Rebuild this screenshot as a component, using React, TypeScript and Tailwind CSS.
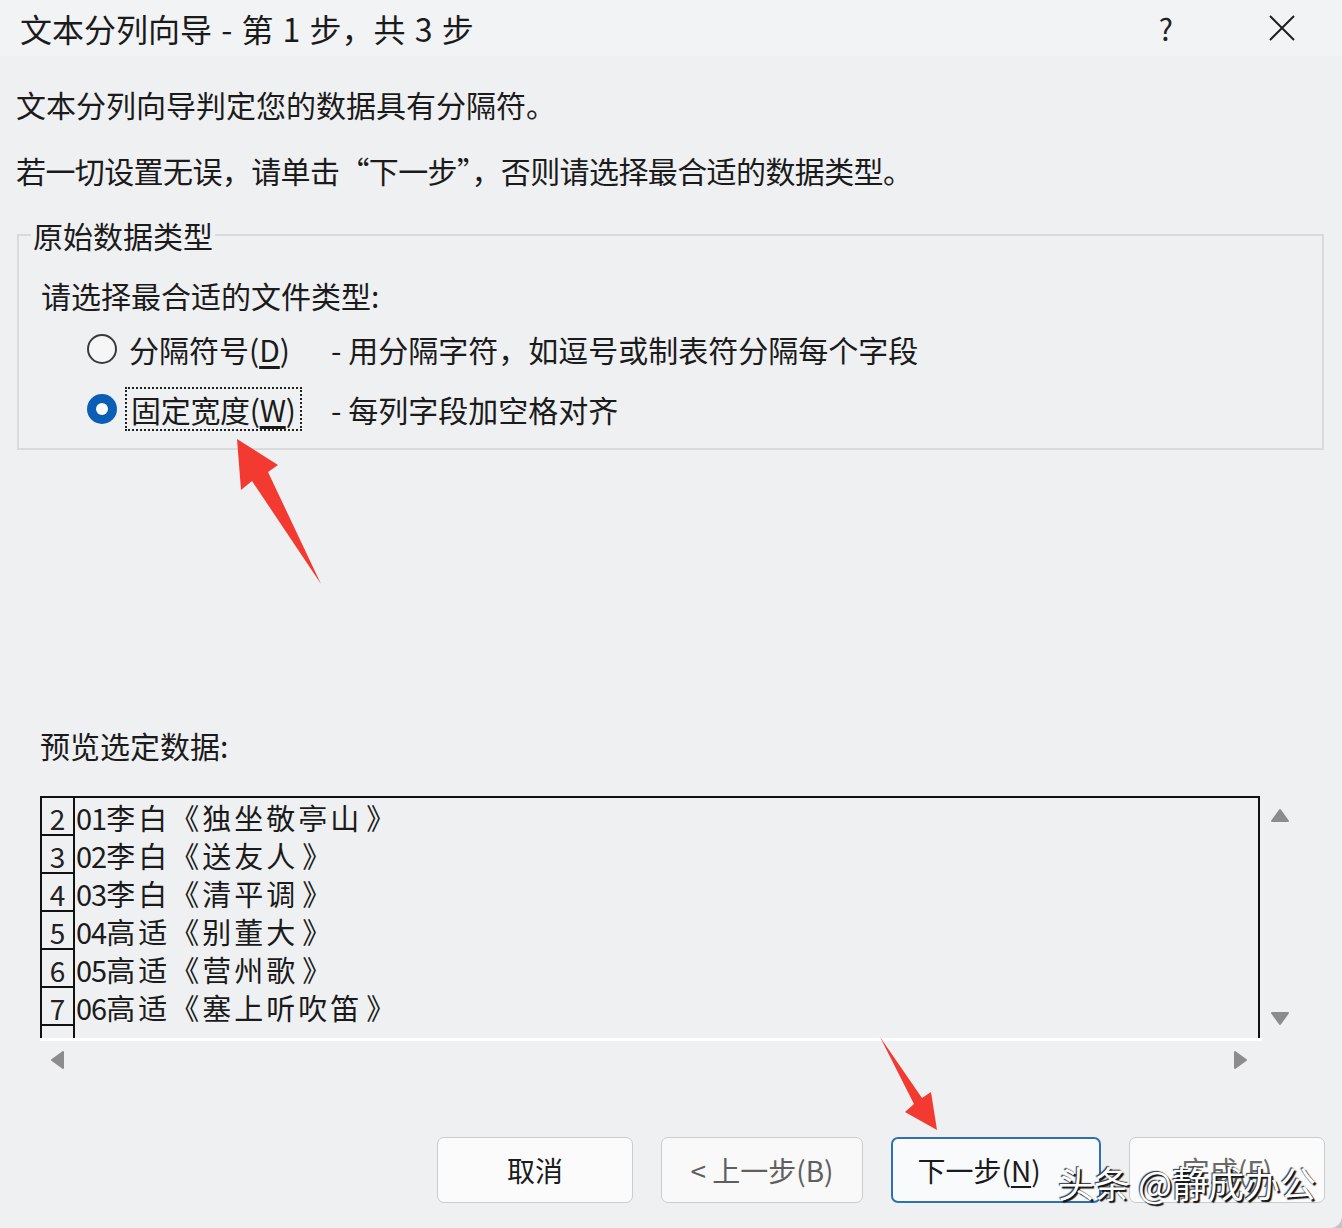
import React from "react";

const rows = [
  { n: "2", id: "01", a: "李白", t: "独坐敬亭山" },
  { n: "3", id: "02", a: "李白", t: "送友人" },
  { n: "4", id: "03", a: "李白", t: "清平调" },
  { n: "5", id: "04", a: "高适", t: "别董大" },
  { n: "6", id: "05", a: "高适", t: "营州歌" },
  { n: "7", id: "06", a: "高适", t: "塞上听吹笛" },
];

function Tri({ dir }: { dir: "up" | "down" | "left" | "right" }) {
  const d = {
    up: "M9 1 L17 12 L1 12 Z",
    down: "M1 2 L17 2 L9 13 Z",
    left: "M13 1 L13 17 L2 9 Z",
    right: "M3 1 L3 17 L14 9 Z",
  }[dir];
  return (
    <svg width="18" height="18" viewBox="0 0 18 18">
      <path d={d} fill="#8c8c8c" stroke="#8c8c8c" strokeWidth="2" strokeLinejoin="round" />
    </svg>
  );
}

export default function App() {
  return (
    <div className="w-[1342px] h-[1228px] bg-[#c4c4c4] font-['Noto_Sans_CJK_SC','Noto_Sans',sans-serif] text-[#1b1b1b]">
      <div className="relative w-full h-full bg-[#eff0f2] rounded-br-[12px] overflow-hidden flex flex-col">
        {/* title bar */}
        <div className="h-[56px] shrink-0 flex items-center bg-[#f2f3f5] pl-[20px]">
          <span className="text-[32px] leading-[40px] [word-spacing:2px]">文本分列向导 - 第 1 步，共 3 步</span>
          <span className="ml-auto text-[30px] leading-[40px] text-[#222] mr-[96px]">?</span>
          <svg width="26" height="26" viewBox="0 0 26 26" className="mr-[47px]">
            <path d="M1 1 L25 25 M25 1 L1 25" stroke="#1f1f1f" strokeWidth="2" />
          </svg>
        </div>

        <div className="px-[16px] flex flex-col text-[30px]">
          <p className="mt-[28px] leading-[40px]">文本分列向导判定您的数据具有分隔符。</p>
          <p className="mt-[26px] leading-[40px] tracking-[-0.6px]">
            若一切设置无误，请单击“下一步”，否则请选择最合适的数据类型。
          </p>

          <fieldset className="mt-[25px] ml-[1px] w-[1307px] border-2 border-[#d9dadc] pl-[12px] pb-[9px]">
            <legend className="px-[2px] leading-[40px]">原始数据类型</legend>
            <div className="pl-[10px]">
              <p className="mt-[20px] leading-[40px]">请选择最合适的文件类型:</p>
              <div className="mt-[4px] ml-[46px] h-[60px] flex items-center">
                <span className="w-[30px] h-[30px] rounded-full border-2 border-[#3a3a3a] bg-[#f6f6f6]" />
                <span className="ml-[12px] w-[202px] leading-[40px]">
                  分隔符号(<span className="underline underline-offset-4">D</span>)
                </span>
                <span className="leading-[40px]">- 用分隔字符，如逗号或制表符分隔每个字段</span>
              </div>
              <div className="ml-[46px] h-[60px] flex items-center">
                <span className="w-[30px] h-[30px] rounded-full bg-[#0a5eb6] flex items-center justify-center">
                  <span className="w-[12px] h-[12px] rounded-full bg-white" />
                </span>
                <span className="ml-[8px] w-[206px]">
                  <span className="inline-block border-2 border-dotted border-[#222] px-[4px] leading-[40px] tracking-[-0.3px]">
                    固定宽度(<span className="underline underline-offset-4">W</span>)
                  </span>
                </span>
                <span className="leading-[40px]">- 每列字段加空格对齐</span>
              </div>
            </div>
          </fieldset>

          <p className="mt-[275px] ml-[24px] leading-[40px]">预览选定数据:</p>

          <div className="mt-[31px] ml-[24px] flex">
            <div className="flex flex-col">
              <div className="w-[1220px] h-[242px] border-2 border-b-0 border-[#111] overflow-hidden flex flex-col">
                {rows.concat([{ n: "", id: "", a: "", t: "" }]).map((r, i) => (
                  <div key={i} className="flex h-[38px] shrink-0">
                    <div className="w-[33px] border-r-2 border-b-2 border-[#111] flex items-end justify-center text-[28px] leading-[31px] text-[#222]">
                      {r.n}
                    </div>
                    {r.id && (
                      <div className="flex items-center text-[29px] leading-[38px] pl-[1px]">
                        <span className="tracking-[-1px]">{r.id}</span>
                        <span className="tracking-[3px]">
                          {r.a}《{r.t}
                          <span className="ml-[4px]">》</span>
                        </span>
                      </div>
                    )}
                  </div>
                ))}
              </div>
              <div className="w-[1222px] h-[3px] bg-white" />
              <div className="h-[38px] flex items-center justify-between pl-[10px] pr-[12px]">
                <Tri dir="left" />
                <Tri dir="right" />
              </div>
            </div>
            <div className="ml-[8px] w-[20px] h-[245px] flex flex-col justify-between items-center pt-[13px] pb-[12px]">
              <Tri dir="up" />
              <Tri dir="down" />
            </div>
          </div>

          <div className="mt-[58px] ml-[421px] flex gap-[28px] text-[28px]">
            <button className="w-[196px] h-[66px] rounded-[7px] border border-[#cbcbcb] bg-[#fbfbfc]">取消</button>
            <button className="w-[202px] h-[66px] rounded-[7px] border border-[#cbcbcb] bg-[#f9f9fa] text-[#5f5f5f]">
              &lt; 上一步(B)
            </button>
            <button className="w-[210px] h-[66px] rounded-[7px] border-2 border-[#2f6fb4] bg-[#f9fafc] pr-[34px]">
              下一步(<span className="underline underline-offset-4">N</span>)
            </button>
            <button className="w-[196px] h-[66px] rounded-[7px] border border-[#cbcbcb] bg-[#fbfbfc] text-[#6a6a6a]">
              完成(F)
            </button>
          </div>
        </div>

        {/* annotation arrows */}
        <svg className="absolute inset-0 pointer-events-none" width="1342" height="1228">
          <path d="M237 439 L278 465 L268 472 L321 584 L252 481 L241 490 Z" fill="#f23a31" />
          <path d="M880 1037 L922 1098 L931 1092 L937 1130 L905 1112 L914 1104 Z" fill="#f23a31" />
        </svg>

        {/* watermark */}
        <span className="absolute left-[1058px] top-[1158px] text-[36px] leading-[48px] text-white [text-shadow:2px_2px_1px_#111,-1px_-1px_1px_#333]">
          头条 @静成办公
        </span>
      </div>
    </div>
  );
}
